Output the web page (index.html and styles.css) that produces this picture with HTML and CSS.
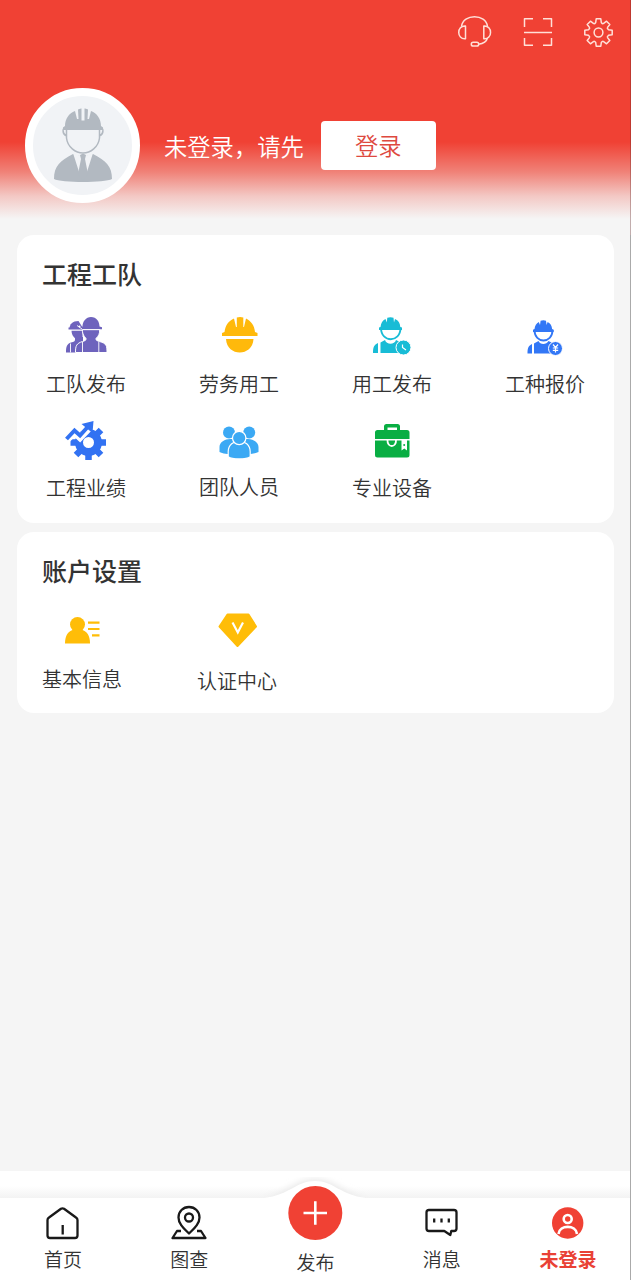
FILE: index.html
```html
<!DOCTYPE html>
<html lang="zh-CN">
<head>
<meta charset="utf-8">
<title>我的</title>
<link rel="stylesheet" href="styles.css">
</head>
<body>
<div class="page">
  <header class="header">
    <div class="tools">
      <svg class="tool" width="36" height="34" viewBox="457 15 36 34"><path d="M461.500 26.500C463 13.500 486 13.500 487.500 26.500"/><path d="M465.500 26v12.800c-9 1-9-13.600 0-12.800zM483.800 26v12.800c9 1 9-13.600 0-12.800zM487.500 38c-1 4-4 5.500-9 6.200"/><rect x="471.300" y="42.300" width="7.400" height="3.700" rx="1.850"/></svg>
      <svg class="tool" width="30" height="30" viewBox="523 17 30 30"><path d="M524.500 27v-8.300h8.500M543 18.700h8.500V27M524.500 38v7.300h8.500M543 45.300h8.500V38M524 32.500h28"/></svg>
      <svg class="tool" width="30" height="30" viewBox="-15.500 -15.500 30 30"><path d="M-2.800-10L-2.300-13.700H2.300L2.800-10Q4 -8.300 5.090-9.050L8.060-11.310L11.310-8.060L9.050-5.090Q8.300-4 10-2.800L13.700-2.300V2.300L10 2.800Q8.300 4 9.050 5.090L11.310 8.060L8.060 11.310L5.090 9.050Q4 8.300 2.800 10L2.300 13.700H-2.300L-2.800 10Q-4 8.300-5.090 9.050L-8.060 11.310L-11.310 8.060L-9.050 5.090Q-8.300 4-10 2.800L-13.700 2.300V-2.300L-10-2.800Q-8.300-4-9.050-5.090L-11.310-8.060L-8.060-11.310L-5.090-9.050Q-4-8.300-2.800-10Z"/><circle r="4.400"/></svg>
    </div>
    <div class="profile">
      <div class="avatar">
        <svg width="100" height="100" viewBox="32 96 100 100">
          <path fill="#b2b9c1" d="M53 179c0-13 6-18 19-25l10 3 10-3c13 7 19 12 19 25-7 4-51 4-58 0z"/>
          <path fill="#f1f3f6" d="M72 153l10 4 10-4-7 22h-6z"/>
          <path fill="#b2b9c1" d="M79 155l3-1.500 3 1.500-1 4 3 15-5 7-5-7 3-15z"/>
          <path fill="#f1f3f6" stroke="#b2b9c1" stroke-width="1.500" d="M65.500 128v10c1 9 9 15 16.500 15s15.500-6 16.500-15v-10M65 128c-4-1-4 6 .5 8M99 128c4-1 4 6-.5 8"/>
          <path fill="#b2b9c1" d="M62 130v-2.500l2-1.500c0-7 4-13 10-15l2 8h1.500l-.5-9.500c2-1 3-1 3.500-1v12h3v-12c.5 0 2 0 3.500 1l-.5 9.500H88l2-8c6 2 10 8 10 15l2 1.500v2.500z"/>
        </svg>
      </div>
      <span class="hint">未登录，请先</span>
      <button class="login">登录</button>
    </div>
  </header>

  <main>
    <section class="card team">
      <h2>工程工队</h2>
      <div class="grid">
        <div class="item"><svg viewBox="46 312 80 48" fill="#6e63bd"><path d="M69.500 328.500c0-4 3-7.500 9-7.500l5 8z"/><path d="M68.500 327.600h14v2h-14zM71.500 330.800h11v8h-7c-2.500-2-4-5-4-8zM75 337h8v15.500H66c0-6 1-8.500 5-10 3-1 4-1 4-3z"/><path stroke="#fff" stroke-width="1" d="M75.500 352.500c0-7 1-9 7-11 3-1 3.500-1 3.500-3-3-3-3.700-6-3.700-9h17.400c0 4-.7 6-3.700 9 0 2 .5 2 3.500 3 7 2 7.500 4 7.500 11z"/><path d="M80.500 327.200l2-.7c0-5 3.500-9.500 8.500-9.500 5.500 0 8.500 4.500 8.500 9.500l2.500.7v2h-21.500z"/><path stroke="#fff" stroke-width=".9" fill="none" d="M70.500 343.500v9M82.500 342v10.500M98.800 342v10.500M82.500 329.700h17.500M77 325.500l5 3.500"/><circle cx="79.500" cy="326.500" r="1" fill="#fff"/></svg><span>工队发布</span></div>
        <div class="item"><svg viewBox="199 312 80 48" fill="#ffb90b"><path d="M222 336v-3l2.500-1c1-7 4-11 9.500-13.500l2 8.500h.8v-9.500c2-.7 4.500-.7 6.500 0v9.500h.7l2-8.500c5 2.500 8.500 7 9 13.500l2.500 1v3zM226 339h27.500c-1 18-26.500 18-27.500 0z"/></svg><span>劳务用工</span></div>
        <div class="item"><svg viewBox="352 312 80 48" fill="#18bcd6"><path d="M379 330v-2.500l1.500-.6c.5-4 2-6.400 5-7.900l1.300 3.500.5-4.800c2-.7 4.400-.7 6.200 0l.5 4.800 1-3.500c3.500 1.500 5 4 5.300 7.900l1.700.6v2.500z"/><path fill="none" stroke="#18bcd6" stroke-width="1.800" d="M381 328c0 15 19.500 15 19.500 0"/><path d="M373 353c0-6 1-8 5-10v10zM380.500 342.500l4.500-2.500c1.500 5 9.500 5 11 0l6 3v10h-21.500z"/><circle cx="403.500" cy="347.500" r="7.500" stroke="#fff" stroke-width="1"/><path fill="none" stroke="#fff" stroke-width="1.200" d="M402.500 344.500v3l3.500 2.500"/></svg><span>用工发布</span></div>
        <div class="item"><svg viewBox="505 312 80 48" fill="#3277f6"><path d="M533 332v-2.300l1.500-.6c.4-3.600 1.800-5.900 4.300-7.200l1.200 3.200.6-4.400c1.800-.7 3.800-.7 5.400 0l.6 4.400 1-3.200c3 1.400 4.200 3.600 4.500 7.200l1.600.6v2.300z"/><path fill="none" stroke="#3277f6" stroke-width="1.800" d="M534.500 330c0 14 18 14 18 0"/><path d="M527.500 353.500c0-6 1-7.500 4.500-9.500v9.500zM534 343.500l4.500-2.500c1.500 4 8 4 10 0l5 2.500v10H534z"/><circle cx="555.500" cy="348.500" r="7" stroke="#fff" stroke-width="1"/><path fill="none" stroke="#fff" stroke-width="1.200" d="M553 344.500l2.500 3 2.500-3M555.500 347.500v5M552.800 348h5.400M552.800 350.300h5.400"/></svg><span>工种报价</span></div>
        <div class="item"><svg viewBox="46 416 80 48" fill="#3272f2"><circle cx="88.500" cy="442.500" r="9.500" fill="none" stroke="#3272f2" stroke-width="8"/><path fill="none" stroke="#3272f2" stroke-width="6.500" d="M88.500 453v7M70.500 442.500h7M99.500 442.500h6.500M76 455l5-5M96 435l5-5M96 450l5 5M88.500 431v-5"/><path fill="none" stroke="#fff" stroke-width="7" d="M65.500 441l9-8.500 5.500 5L93 424"/><path fill="#fff" d="M65 418h20v10l-12 8-8 2z"/><path fill="none" stroke="#3272f2" stroke-width="4" d="M66.500 439l8-8.500 5.500 5 9-10"/><path d="M81.500 424l12-3-1 12z"/></svg><span>工程业绩</span></div>
        <div class="item up"><svg viewBox="199 416 80 48" fill="#3ba9f4"><circle cx="229" cy="432.500" r="6"/><circle cx="249.200" cy="432.500" r="6"/><path d="M219.500 452v-5c0-9 18-12 20-1v8c-7 1-16 0-20-2zM238.500 454v-8c2-11 20-8 20 1v5c-4 2-13 3-20 2z"/><g stroke="#fff" stroke-width="1.200"><path d="M228.200 456.700v-5c0-14 22-14 22 0v5c-4 3-18 3-22 0z"/><circle cx="239.200" cy="438" r="6.700"/></g></svg><span>团队人员</span></div>
        <div class="item"><svg viewBox="352 416 80 48" fill="#09ae43"><path fill-rule="evenodd" d="M384 430v-3.500q0-2.500 2.500-2.500h11q2.500 0 2.500 2.500v3.500h7q2.500 0 2.500 2.500v6.500h-34.500v-6.500q0-2.500 2.500-2.500zM387.500 430h9.500v-2.500h-9.500zM375 440.500h34.500V455q0 2.500-2.500 2.500h-29.500q-2.500 0-2.500-2.500z"/><path fill="none" stroke="#fff" stroke-width="1.800" d="M387.500 440c-.5 8 9 8 8.500 0"/><path fill="#fff" d="M401.500 440h5.500v10.500l-2.700-2-2.800 2z"/><circle cx="404.200" cy="445" r="1"/></svg><span>专业设备</span></div>
      </div>
    </section>

    <section class="card account">
      <h2>账户设置</h2>
      <div class="grid">
        <div class="item"><svg viewBox="42 606 80 48" fill="#ffbd08"><circle cx="77.500" cy="624.500" r="7.500"/><path d="M65 643.500c0-8 3-12.500 9-14h7c6 1.500 9 6 9 14z"/><path fill="none" stroke="#ffbd08" stroke-width="2.200" d="M88 622.700h11.500M88 629h11.500M92 635.300h7.500"/></svg><span>基本信息</span></div>
        <div class="item down"><svg viewBox="197 606 80 48" fill="#ffbd08"><path stroke="#ffbd08" stroke-width="2" stroke-linejoin="round" d="M227.500 614.500h21l7.500 12-18.500 19.500L219.500 626.500z"/><path fill="none" stroke="#fff" stroke-width="2.200" d="M232.500 622.500l5.300 10 5.200-10"/></svg><span>认证中心</span></div>
      </div>
    </section>
  </main>

  <footer class="footer">
    <svg class="edge" width="630" height="27" viewBox="0 1171 630 27">
      <defs><linearGradient id="shade" x1="0" y1="0" x2="0" y2="1"><stop offset="0" stop-color="#fff"/><stop offset="1" stop-color="#f3f3f3"/></linearGradient><filter id="blur"><feGaussianBlur stdDeviation="3"/></filter></defs>
      <path fill="url(#shade)" d="M0 1186h630v12H0z"/>
      <path fill="#e9e9e9" filter="url(#blur)" d="M262 1198c26-4 32-19 53-19s27 15 53 19z"/>
      <path fill="#fff" d="M264 1198c26-3 32-17 51-17s25 14 51 17z"/>
    </svg>
    <nav class="tabs">
      <div class="tab"><svg viewBox="43 1204 40 38"><path d="M47.500 1220q0-1.500 1.500-2.500l12-8.700q1.500-1 3 0l12 8.700q1.500 1 1.500 2.500v15.500q0 2.500-2.500 2.500H50q-2.500 0-2.500-2.500zM62.700 1225v9.500"/></svg><span>首页</span></div>
      <div class="tab"><svg viewBox="169 1204 40 38"><path d="M189 1233.500c-5-5-10.500-9.500-10.500-16 0-6 4.500-10.500 10.500-10.500s10.500 4.500 10.500 10.500c0 6.500-5.500 11-10.500 16zM181 1231h-4l-4.500 7h33l-4.500-7h-4"/><circle cx="189" cy="1217.500" r="4"/></svg><span>图查</span></div>
      <div class="tab publish"><svg viewBox="287 1185 56 56"><circle class="red" cx="315.300" cy="1213" r="27"/><path class="light" d="M303.500 1213h23.500M315.300 1201.200v23.500"/></svg><span>发布</span></div>
      <div class="tab"><svg viewBox="421.500 1204.500 40 38"><path d="M428.500 1210.500h25q2.500 0 2.500 2.500v16q0 2.500-2.500 2.500h-2.700l-1 4-6-4h-15.300q-2.500 0-2.500-2.500v-16q0-2.500 2.500-2.500zM433.700 1219v4M441 1219v4M448.300 1219v4"/></svg><span>消息</span></div>
      <div class="tab active"><svg viewBox="548 1204 40 38"><circle class="red" cx="567.700" cy="1223" r="15.700"/><g class="light"><circle cx="567.700" cy="1219" r="4"/><path d="M558.500 1234c1-9.500 17.500-9.500 18.500 0"/></g></svg><span>未登录</span></div>
    </nav>
  </footer>
</div>
</body>
</html>
```
FILE: styles.css
```css
* { box-sizing: border-box; }
body { margin: 0; font-family: "Noto Sans CJK SC", sans-serif; font-weight: 350; color: #333; }
svg { display: block; }
.page { display: flex; flex-direction: column; height: 1280px; background: #f5f5f5; border-right: 1px solid #aaa; }
.header { height: 235px; margin-right: -1px; border-right: 1px solid rgba(100, 40, 40, .35); background: linear-gradient(#f04134 0, #f04134 142px, #f08278 172px, #f3c8c4 196px, #f5f5f5 219px); }
.tools { display: flex; justify-content: flex-end; align-items: center; gap: 30px; height: 64px; padding-right: 17px; }
.tool { fill: none; stroke: #ffe0d8; stroke-width: 1.5; stroke-linejoin: round; }
.profile { display: flex; align-items: center; height: 115px; margin-top: 24px; padding-left: 24.5px; }
.avatar { display: grid; place-items: center; width: 115px; height: 115px; border: 8px solid #fff; border-radius: 50%; background: #f1f3f6; }
.hint { margin-left: 24.5px; color: #fff; font-size: 23.3px; line-height: 34px; white-space: nowrap; }
.login { width: 115px; height: 49px; margin-left: 17px; padding: 0 0 1px; border: 0; border-radius: 4px; background: #fff; color: #de493f; font: 350 23.3px/34px "Noto Sans CJK SC", sans-serif; }
main { flex: 1; display: flex; flex-direction: column; gap: 9px; padding: 0 16px 0 17px; }
.card { border-radius: 17px; background: #fff; }
.team { height: 288px; }
.account { height: 181px; }
h2 { height: 58px; margin: 0; padding: 20px 0 0 25px; font-size: 25px; font-weight: 500; line-height: 36px; }
.grid { display: grid; grid-template-columns: repeat(4, 80px); }
.team .grid { column-gap: 73px; row-gap: 20px; padding: 19px 0 0 29px; }
.account .grid { column-gap: 75px; padding: 16px 0 0 25px; }
.item { height: 84px; font-size: 20px; line-height: 24px; white-space: nowrap; }
.item svg { width: 80px; height: 48px; }
.item span { display: block; padding-top: 12px; }
.item.up span { padding-top: 11px; }
.account .item span { padding-top: 13px; }
.account .item.down span { padding-top: 15px; }
.footer { height: 109px; background: #fff; }
.tabs { display: grid; grid-template-columns: repeat(5, 1fr); height: 82px; margin-right: -1px; }
.tab { display: flex; flex-direction: column; align-items: center; padding-top: 6px; color: #333; font-size: 19px; line-height: 24px; }
.tab svg { width: 40px; height: 38px; fill: none; stroke: #191919; stroke-width: 2.3; stroke-linejoin: round; }
.tab span { padding-top: 5px; }
.tab.publish { padding-top: 0; }
.tab.publish svg { width: 56px; height: 56px; margin-top: -13px; }
.tab.publish span { padding-top: 9px; }
.tab .red { fill: #f04134; stroke: none; }
.tab .light { stroke: #fff; stroke-width: 2.6; }
.tab.active { color: #e94135; font-weight: 700; }
```
